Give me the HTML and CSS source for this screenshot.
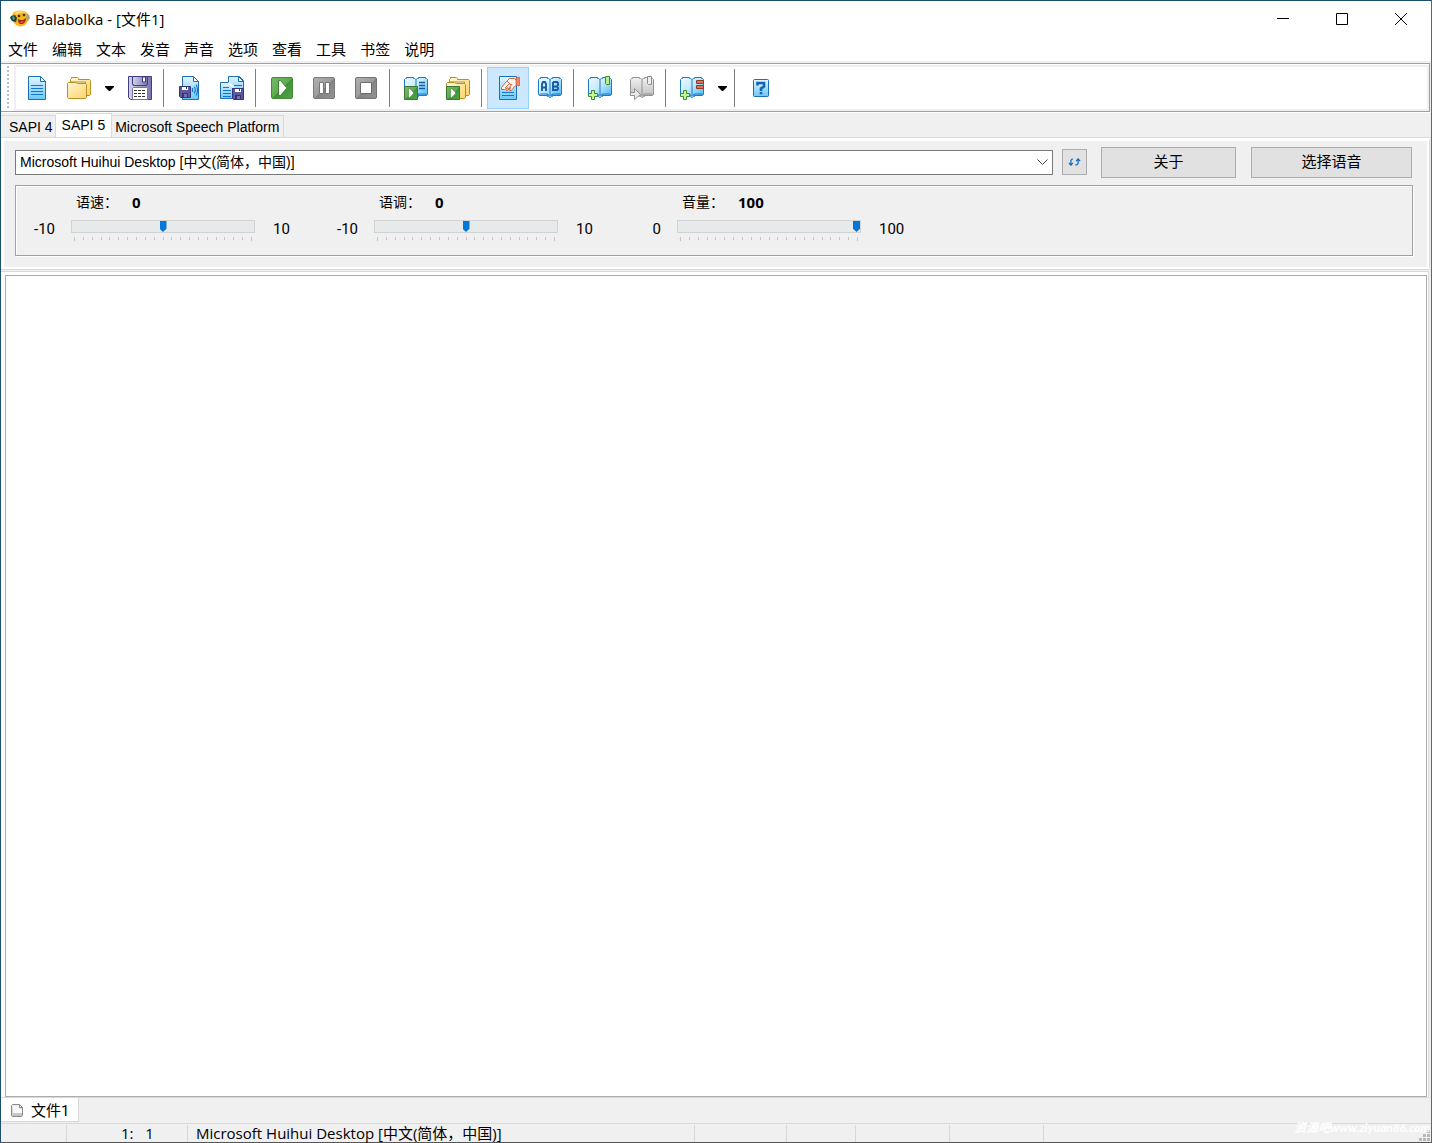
FILE: index.html
```html
<!DOCTYPE html>
<html lang="zh-CN">
<head>
<meta charset="utf-8">
<title>Balabolka - [文件1]</title>
<link rel="stylesheet" href="styles.css">
</head>
<body>
<svg class="defs" width="0" height="0" aria-hidden="true">
  <defs>
    <linearGradient id="blue" x1="0" y1="0" x2="1" y2="1"><stop offset="0" stop-color="#f0faff"/><stop offset="0.45" stop-color="#c4eafd"/><stop offset="1" stop-color="#3fb4f5"/></linearGradient>
    <linearGradient id="page" x1="0" y1="0" x2="0" y2="1"><stop offset="0" stop-color="#e4f5fe"/><stop offset="1" stop-color="#6cc8f8"/></linearGradient>
    <linearGradient id="gold" x1="0" y1="0" x2="1" y2="1"><stop offset="0.1" stop-color="#fff3c8"/><stop offset="1" stop-color="#fdd468"/></linearGradient>
    <linearGradient id="violet" x1="0" y1="0" x2="1" y2="0"><stop offset="0" stop-color="#d4d4ec"/><stop offset="1" stop-color="#7774ae"/></linearGradient>
    <linearGradient id="green" x1="0" y1="0" x2="1" y2="1"><stop offset="0" stop-color="#77b96c"/><stop offset="0.5" stop-color="#5eab50"/><stop offset="0.52" stop-color="#3f9336"/><stop offset="1" stop-color="#51a647"/></linearGradient>
    <linearGradient id="grey" x1="0" y1="0" x2="1" y2="1"><stop offset="0" stop-color="#b0b0b0"/><stop offset="0.5" stop-color="#9c9c9c"/><stop offset="0.52" stop-color="#838383"/><stop offset="1" stop-color="#949494"/></linearGradient>
    <linearGradient id="silver" x1="0" y1="0" x2="0" y2="1"><stop offset="0" stop-color="#f2f2f2"/><stop offset="1" stop-color="#bcbcbc"/></linearGradient>
    <symbol id="book" viewBox="0 0 24 24">
      <path d="M.5 3.500l1-1h1v-1h7v1h1l1.500 1 1.500-1h1v-1h7v1h1l1 1v15h-1v1h-8v1h-1l-1 1h-1l-1-1h-1v-1h-8v-1h-1z"/>
      <path d="M12 4v16" fill="none"/>
      <path d="M2 18h7l2 1.500M22 18h-7l-2 1.500" fill="none" stroke-width="1.200"/>
    </symbol>
    <symbol id="plus" viewBox="0 0 10 10"><path d="M3.500.5h3v3h3v3h-3v3h-3v-3h-3v-3h3z" fill="#c5f59a" stroke="#3c8b2c"/></symbol>
    <symbol id="disk" viewBox="0 0 12 12">
      <path d="M.5.5h11v11h-10l-1-1z" fill="#5d5b9c" stroke="#35337a"/><path d="M3 1h6v3H3z" fill="#fff"/><path d="M7 1h1v2H7zM3 7h6v4H3z" fill="#35337a"/><path d="M5 8h3v3H5z" fill="#7775b3"/>
    </symbol>
    <symbol id="mini-play" viewBox="0 0 14 14"><path d="M.5.5h13v13H.5z" fill="url(#green)" stroke="#39762f"/><path d="M4.500 2.500h2v1h1v1h1v1h1v3h-1v1h-1v1h-1v1h-2z" fill="#fff" stroke="#3d8133" stroke-width=".6"/></symbol>
    <symbol id="folder" viewBox="0 0 24 24">
      <path d="M3.500 6V3.500l1-1v-1h6l1 1v1h11l1 1v14l-1 1h-4V6z" fill="url(#gold)"/><path d="M1.500 6.500h7l2 1h8l1 1v13l-1 1h-17l-1-1v-14z" fill="url(#gold)"/>
    </symbol>
    <symbol id="ticks" viewBox="0 0 184 5">
      <path d="M3.500 0v4M12.500 0v3M21.500 0v3M30.500 0v3M38.500 0v3M47.500 0v3M56.500 0v3M65.500 0v3M74.500 0v3M83.500 0v3M92.500 0v3M100.500 0v3M109.500 0v3M118.500 0v3M127.500 0v3M136.500 0v3M145.500 0v3M153.500 0v3M162.500 0v3M171.500 0v3M180.500 0v4" fill="none" stroke="#c4c4c4"/>
    </symbol>
  </defs>
</svg>

<div class="window">
  <header class="titlebar">
    <svg class="logo" width="20" height="18" viewBox="0 0 20 18" aria-hidden="true">
      <path d="M3 3C6-.5 15-.5 18 4c2 4 0 8-3 11-3 2-7 2-10-1C2 12 1 7 3 3z" fill="#f5b51c"/>
      <path d="M5 3c3-3 9-2 11 0-3-1-7-1-10 2z" fill="#ffe076"/>
      <path d="M1 6l4-1 2 3-1 4-4-1-2-3z" fill="#20433a"/><path d="M2 7l2-1 1 3-2 1z" fill="#4a9d86"/>
      <path d="M17 4l2 1 1 3-2 3-2-3z" fill="#a9a08c"/>
      <path d="M8 9c3 2 6 1 8-1 0 4-2 6-5 6-2 0-3-2-3-5z" fill="#9d2a12"/><path d="M10 12c2-1 3-1 4 0l-3 1z" fill="#ef6c52"/>
      <circle cx="9" cy="6" r="1.300" fill="#4b2c0b"/><circle cx="14" cy="5" r="1.300" fill="#4b2c0b"/>
    </svg>
    <h1 class="title">Balabolka - [文件1]</h1>
    <div class="window-buttons">
      <button class="window-button" aria-label="最小化"><svg width="12" height="12" viewBox="0 0 12 12"><path d="M0 5.500h12"/></svg></button>
      <button class="window-button" aria-label="最大化"><svg width="12" height="12" viewBox="0 0 12 12"><path d="M.5.5h11v11H.5z"/></svg></button>
      <button class="window-button" aria-label="关闭"><svg width="12" height="12" viewBox="0 0 12 12"><path d="M0 0l12 12M12 0L0 12"/></svg></button>
    </div>
  </header>

  <nav class="menu">
    <button>文件</button><button>编辑</button><button>文本</button><button>发音</button><button>声音</button><button>选项</button><button>查看</button><button>工具</button><button>书签</button><button>说明</button>
  </nav>

  <div class="toolbar">
    <span class="grip"></span>
    <div class="tools">
      <button class="tool" aria-label="新建"><svg viewBox="0 0 24 24"><path d="M3.500.5h12l5 5v18h-17z" fill="url(#page)" stroke="#1a6fb5"/><path d="M15.500.5v5h5z" fill="#fff" stroke="#1a6fb5"/><path d="M6 9.500h12M6 12.500h12M6 15.500h12M6 18.500h12" stroke="#1476c6"/></svg></button>
      <button class="tool" aria-label="打开"><svg viewBox="0 0 24 24"><use href="#folder" stroke="#b5901e"/></svg></button>
      <button class="drop" aria-label="最近的文件"><svg viewBox="0 0 9 5"><path d="M0 0h9v1L5 5H4L0 1z"/></svg></button>
      <button class="tool" aria-label="保存"><svg viewBox="0 0 24 24"><path d="M.5.5h23v23h-21l-2-2z" fill="url(#violet)" stroke="#403d85"/><path d="M4.500.5h15v8h-1v1h-13v-1h-1z" fill="url(#violet)" stroke="#403d85"/><path d="M14.500 1h3v5h-3z" fill="#f4f4fb" stroke="#403d85"/><path d="M4.500 12.500l1-1h13l1 1v11h-15z" fill="#fff" stroke="#77759f"/><path d="M6 14.500h12M6 17.500h12M6 20.500h12" stroke="#333" stroke-dasharray="3 1"/></svg></button>
      <span class="divider"></span>
      <button class="tool" aria-label="保存音频文件"><svg viewBox="0 0 24 24"><path d="M4.500.5h11l5 5v18h-16z" fill="url(#page)" stroke="#1a6fb5"/><path d="M15.500.5v5h5z" fill="#fff" stroke="#1a6fb5"/><path d="M14.500 12v4M16 10.500c1.500 2 1.500 5 0 7M18 8.500c2 3 2 8 0 11" fill="none" stroke="#1476c6" stroke-width="1.200"/><use href="#disk" x="1" y="10" width="12" height="12"/></svg></button>
      <button class="tool" aria-label="拆分并转换"><svg viewBox="0 0 24 24"><path d="M8.500.5h11l4 4v14h-15z" fill="url(#page)" stroke="#1a6fb5"/><path d="M18.500.5v5h5z" fill="#fff" stroke="#1a6fb5"/><path d="M14 9.500h8" stroke="#1476c6"/><path d="M.5 6.500h8l4 4v12H.5z" fill="url(#page)" stroke="#1a6fb5"/><path d="M8.500 6.500l5 5" stroke="#fff" stroke-width="2"/><path d="M3 11.500h6M3 14.500h8M3 17.500h8M3 20.500h8" stroke="#1476c6"/><use href="#disk" x="12" y="12" width="12" height="12"/></svg></button>
      <span class="divider"></span>
      <button class="tool" aria-label="朗读"><svg viewBox="0 0 24 24"><rect x="1.500" y="1.500" width="21" height="21" rx="1.500" fill="url(#green)" stroke="#438b39"/><path d="M8.500 4.500h2l6 7v1l-6 7h-2z" fill="#fff" stroke="#3d8133"/></svg></button>
      <button class="tool" aria-label="暂停"><svg viewBox="0 0 24 24"><rect x="1.500" y="1.500" width="21" height="21" rx="1.500" fill="url(#grey)" stroke="#7b7b7b"/><path d="M7.500 6.500h4v11h-4zM13.500 6.500h4v11h-4z" fill="#fff" stroke="#747474"/></svg></button>
      <button class="tool" aria-label="停止"><svg viewBox="0 0 24 24"><rect x="1.500" y="1.500" width="21" height="21" rx="1.500" fill="url(#grey)" stroke="#737373"/><path d="M6.500 6.500h11v11h-11z" fill="#fff" stroke="#6c6c6c"/></svg></button>
      <span class="divider"></span>
      <button class="tool" aria-label="朗读全文"><svg viewBox="0 0 24 24"><use href="#book" fill="url(#blue)" stroke="#1c79c8"/><path d="M15 6.500h6M15 9.500h6M15 12.500h6" stroke="#1259a0" stroke-width="1.500"/><use href="#mini-play" x="0" y="10" width="14" height="14"/></svg></button>
      <button class="tool" aria-label="批量转换"><svg viewBox="0 0 24 24"><use href="#folder" stroke="#b5901e"/><use href="#mini-play" x="0" y="10" width="14" height="14"/></svg></button>
      <span class="divider"></span>
      <button class="tool selected" aria-label="监视剪贴板" aria-pressed="true"><svg viewBox="0 0 24 24"><path d="M3.500.5h17v23h-17z" fill="url(#page)" stroke="#1a6fb5"/><path d="M6 16.500h12M6 19.500h12" stroke="#1476c6"/><path d="M5.500 13.500v-2l5-6 3-3h5l2 2v5l-2 1-3 4h-2l1-3-3 3h-1l1-3-3 2z" fill="#fff4ee" stroke="#d4643e"/><path d="M9 12l5-5M12 13l4-5M11 5l4 4" stroke="#d4643e"/><path d="M20 2l3-1 1 1v7l-1 1-3-1z" fill="#ed8563" stroke="#ca5937" stroke-width=".7"/></svg></button>
      <button class="tool" aria-label="词典"><svg viewBox="0 0 24 24"><use href="#book" fill="url(#blue)" stroke="#1c79c8"/><path d="M4 15V8l1-2h2l1 2v7M4 11.500h4M15 6h4l1 1v2l-1 1.500h-4M19 10.500l1 1.500v1l-1 1h-4V6" fill="none" stroke="#155ba6" stroke-width="1.900"/></svg></button>
      <span class="divider"></span>
      <button class="tool" aria-label="添加书签"><svg viewBox="0 0 24 24"><use href="#book" fill="url(#blue)" stroke="#1c79c8"/><path d="M17.500.5h4v8h-3l-1-1z" fill="#b9ed86" stroke="#3c8b2c"/><use href="#plus" x="0" y="14" width="10" height="10"/></svg></button>
      <button class="tool" aria-label="转到书签"><svg viewBox="0 0 24 24"><use href="#book" fill="url(#silver)" stroke="#929292"/><path d="M17.500.5h4v8h-3l-1-1z" fill="#eee" stroke="#8b8b8b"/><path d="M.5 16.500h4v-4l6 6-6 5v-4h-4z" fill="#e8e8e8" stroke="#929292"/></svg></button>
      <span class="divider"></span>
      <button class="tool" aria-label="命名书签"><svg viewBox="0 0 24 24"><use href="#book" fill="url(#blue)" stroke="#1c79c8"/><path d="M16.500 4.500h7v3h-7zM16.500 9.500h7v3h-7z" fill="#df7450" stroke="#8d3d28"/><use href="#plus" x="0" y="14" width="10" height="10"/></svg></button>
      <button class="drop" aria-label="书签列表"><svg viewBox="0 0 9 5"><path d="M0 0h9v1L5 5H4L0 1z"/></svg></button>
      <span class="divider"></span>
      <button class="tool" aria-label="帮助"><svg viewBox="0 0 24 24"><rect x="4.500" y="3.500" width="15" height="17" rx="1" fill="url(#page)" stroke="#1a6fb5"/><path d="M8.500 9.500V7h6.500v3.500L12 12.500V15M12 16v2.200" fill="none" stroke="#1565b2" stroke-width="2.600"/></svg></button>
    </div>
  </div>

  <div class="engine-tabs" role="tablist">
    <button class="engine-tab" role="tab">SAPI 4</button>
    <button class="engine-tab active" role="tab" aria-selected="true">SAPI 5</button>
    <button class="engine-tab" role="tab">Microsoft Speech Platform</button>
  </div>

  <section class="panel" role="tabpanel">
    <div class="voice-row">
      <div class="voice">
        <select class="voice-select" aria-label="语音"><option>Microsoft Huihui Desktop [中文(简体，中国)]</option></select>
        <svg class="chevron" width="11" height="7" viewBox="0 0 11 7" aria-hidden="true"><path d="M.5.5l5 5 5-5"/></svg>
      </div>
      <button class="push refresh" aria-label="刷新"><svg width="13" height="8" viewBox="0 0 14 10"><path d="M5 1.500H4L2.500 3v5M0 6l2.500 3L5 6M8 8.500h2L11.500 7V2M9 4l2.500-3L14 4" fill="none" stroke="#0c6cc4" stroke-width="1.500"/></svg></button>
      <button class="push about">关于</button>
      <button class="push choose">选择语音</button>
    </div>
    <div class="sliders">
      <div class="slider">
        <div class="caption"><label for="rate">语速：</label><output class="value" for="rate">0</output></div>
        <span class="min">-10</span>
        <input id="rate" type="range" min="-10" max="10" value="0">
        <span class="max">10</span>
        <svg class="ticks" width="184" height="5" aria-hidden="true"><use href="#ticks"/></svg>
      </div>
      <div class="slider">
        <div class="caption"><label for="pitch">语调：</label><output class="value" for="pitch">0</output></div>
        <span class="min">-10</span>
        <input id="pitch" type="range" min="-10" max="10" value="0">
        <span class="max">10</span>
        <svg class="ticks" width="184" height="5" aria-hidden="true"><use href="#ticks"/></svg>
      </div>
      <div class="slider">
        <div class="caption"><label for="volume">音量：</label><output class="value" for="volume">100</output></div>
        <span class="min">0</span>
        <input id="volume" type="range" min="0" max="100" value="100">
        <span class="max">100</span>
        <svg class="ticks" width="184" height="5" aria-hidden="true"><use href="#ticks"/></svg>
      </div>
    </div>
  </section>

  <main class="editor"><textarea class="text" aria-label="文本"></textarea></main>

  <div class="documents" role="tablist">
    <button class="document" role="tab" aria-selected="true">
      <svg width="14" height="15" viewBox="0 0 14 15" aria-hidden="true"><path d="M2.500 1.500h7l3 3v8l-1 1h-9l-1-1v-10z" fill="url(#silver)" stroke="#8a8a8a"/><path d="M3 3h6v3h3v4H3z" fill="#f8f8f8"/><path d="M9.500 1.500v3h3" fill="none" stroke="#8a8a8a"/></svg>
      <span>文件1</span>
    </button>
  </div>

  <footer class="status">
    <span></span>
    <span class="position">1:&nbsp;&nbsp; 1</span>
    <span class="voice-name">Microsoft Huihui Desktop [中文(简体，中国)]</span>
    <span></span><span></span><span></span><span></span>
    <span class="last"><svg class="size-grip" width="11" height="11" viewBox="0 0 11 11" aria-hidden="true"><path d="M8 0h3v3H8zM4 4h3v3H4zM8 4h3v3H8zM0 8h3v3H0zM4 8h3v3H4zM8 8h3v3H8z" fill="#b8b8b8"/></svg></span>
  </footer>
  <div class="watermark">资源吧www.ziyuan86.com</div>
</div>
</body>
</html>
```
FILE: styles.css
```css
* { box-sizing: border-box; }

body {
  margin: 0;
  color: #000;
  font: 15px/20px Roboto, "Noto Sans CJK SC", sans-serif;
}

button {
  margin: 0;
  padding: 0;
  border: 0;
  background: none;
  color: inherit;
  font: inherit;
}

svg { display: block; }

.defs { position: absolute; }

.window {
  position: relative;
  display: flex;
  flex-direction: column;
  min-height: 100vh;
  border: 1px solid #1c4e70;
  border-right-color: #666;
  border-bottom-color: #555;
  background: #f0f0f0;
}

/* Title bar */
.titlebar {
  display: flex;
  align-items: center;
  height: 36px;
  padding: 0 1px 0 9px;
  background: #fff;
}

.title {
  flex: 1;
  margin: 0 0 0 5px;
  font: 15px/20px "Open Sans", "Noto Sans CJK SC", sans-serif;
}

.window-buttons { display: flex; }

.window-button {
  display: grid;
  place-items: center;
  width: 59px;
  height: 36px;
}

.window-button path {
  fill: none;
  stroke: #000;
}

/* Menu */
.menu {
  display: flex;
  gap: 14px;
  height: 24px;
  padding: 2px 0 0 7px;
  background: #fff;
}

.menu button { line-height: 22px; }

/* Toolbar */
.toolbar {
  display: flex;
  height: 49px;
  margin: 2px 1px 0 0;
  padding-top: 1px;
  border: 1px solid #a0a0a0;
  border-left-width: 0;
  background: #fff;
}

.grip {
  width: 2px;
  height: 44px;
  margin: 1px 5px 0 6px;
  background: repeating-linear-gradient(#bbb 0 2px, #fff 2px 4px);
}

.tools {
  display: flex;
  flex: 1;
  border: 2px solid #f0f0f0;
}

.tool {
  display: grid;
  place-items: center;
  width: 42px;
  height: 42px;
}

.tool > svg {
  width: 24px;
  height: 24px;
}

.tool.selected {
  border: 1px solid #99d1ff;
  background: #cce8ff;
}

.drop {
  display: grid;
  place-items: center;
  width: 19px;
  height: 42px;
}

.drop svg {
  width: 9px;
  height: 5px;
}

.divider {
  width: 8px;
  height: 38px;
  margin-top: 2px;
  background: linear-gradient(#808080, #808080) 2px 0 / 1px 100% no-repeat;
}

/* Speech engine tabs */
.engine-tabs {
  display: flex;
  align-items: flex-end;
  height: 26px;
  border-top: 1px solid #fff;
  border-bottom: 1px solid #d9d9d9;
  font: 14px/20px "Liberation Sans", sans-serif;
}

.engine-tab {
  height: 22px;
  padding: 0 4px 0 3px;
  border: solid #d9d9d9;
  border-width: 1px 1px 0 0;
}

.engine-tab:first-child { padding: 0 2px 0 8px; }

.engine-tab.active {
  height: 24px;
  padding: 0 6px 2px;
  background: #fff;
}

/* Voice panel */
.panel {
  margin-right: 1px;
  padding: 5px 17px 11px 11px;
  border: 3px solid #fff;
  border-right: 1px solid #d9d9d9;
  border-bottom: 2px solid #fff;
  box-shadow: inset -2px 0 #fff, 0 1px #d9d9d9;
}

.voice-row {
  display: flex;
  align-items: center;
  height: 32px;
}

.voice {
  position: relative;
  flex: 1;
  margin-right: 9px;
}

.voice-select {
  display: block;
  width: 100%;
  height: 25px;
  padding: 0 4px;
  border: 1px solid #7a7a7a;
  border-radius: 0;
  background: #fff;
  color: #000;
  font: 14px/22px "Liberation Sans", "Noto Sans CJK SC", sans-serif;
  appearance: none;
}

.chevron {
  position: absolute;
  top: 9px;
  right: 5px;
  fill: none;
  stroke: #444;
  pointer-events: none;
}

.push {
  display: grid;
  place-items: center;
  height: 31px;
  border: 1px solid #adadad;
  background: #e1e1e1;
}

.refresh {
  width: 25px;
  height: 26px;
  margin-right: 14px;
}

.about {
  width: 135px;
  margin-right: 15px;
}

.choose { width: 161px; }

/* Rate, pitch and volume */
.sliders {
  display: flex;
  height: 71px;
  margin: 7px -1px 0 0;
  border: 1px solid #a0a0a0;
  box-shadow: inset 1px 1px #fff, 1px 1px #fff;
}

.slider {
  display: grid;
  grid-template: 25px 20px 5px / 39px 184px 32px;
  column-gap: 16px;
  width: 303px;
  padding-top: 6px;
}

.caption {
  display: flex;
  grid-column: 2 / 4;
  padding-left: 5px;
}

.caption label {
  width: 56px;
  font-size: 14px;
}

.value {
  font-family: "Open Sans", sans-serif;
  font-weight: 700;
}

.min { text-align: right; }

.min, .max { padding-top: 2px; }

.max { padding-left: 2px; }

.slider input {
  width: 184px;
  height: 13px;
  margin: 3px 0 0;
  padding: 0;
  border: 1px solid #d2d2d2;
  background: #e7eaea;
  appearance: none;
}

.slider input::-webkit-slider-thumb {
  width: 7px;
  height: 11px;
  background: #0078d7;
  clip-path: polygon(0 0, 100% 0, 100% 70%, 50% 100%, 0 70%);
  appearance: none;
}

.ticks { grid-column: 2; }

/* Text area */
.editor {
  display: flex;
  flex: 1;
  margin: 2px 2px 0 0;
  padding: 3px 1px 0 4px;
  border: solid #d9d9d9;
  border-width: 1px 1px 1px 0;
  background: #fff;
}

.text {
  flex: 1;
  padding: 4px;
  border: 1px solid #abadb3;
  font: inherit;
  resize: none;
}

/* Open documents */
.documents {
  display: flex;
  height: 24px;
}

.document {
  display: flex;
  align-items: center;
  gap: 7px;
  padding: 2px 9px 0;
  border: solid #d9d9d9;
  border-width: 0 1px 1px 0;
  background: #fff;
}

/* Status bar */
.status {
  display: grid;
  grid-template-columns: 66px 121px 507px 92px 69px 94px 94px 1fr;
  height: 19px;
  margin-top: 1px;
  padding-top: 1px;
  border-top: 1px solid #d9d9d9;
  font: 15px/17px "Open Sans", "Noto Sans CJK SC", sans-serif;
}

.status span {
  height: 17px;
  border-right: 1px solid #d9d9d9;
  white-space: nowrap;
}

.status .position { padding-left: 54px; }

.status .voice-name { padding-left: 8px; }

.status .last {
  display: flex;
  align-items: flex-end;
  justify-content: flex-end;
  padding: 0 1px 1px 0;
  border: 0;
}

.watermark {
  position: absolute;
  right: 1px;
  bottom: 6px;
  color: #fff;
  font: italic 700 12px/16px Lato, "Noto Sans CJK SC", sans-serif;
  pointer-events: none;
}
```
